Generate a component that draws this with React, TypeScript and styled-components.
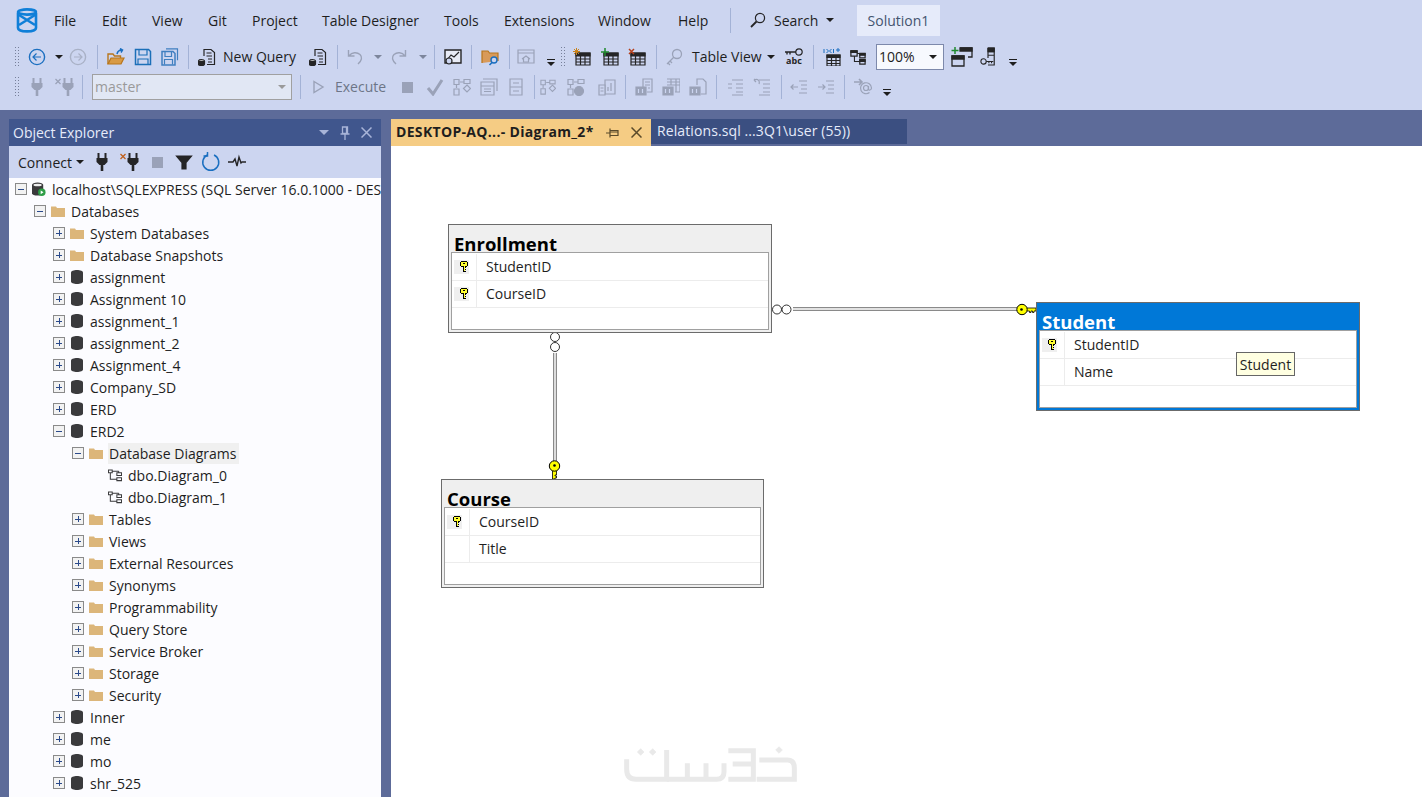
import React from "react";
import styled, { createGlobalStyle } from "styled-components";

const Global = createGlobalStyle`
  html, body { margin: 0; padding: 0; height: 100%; overflow: hidden; }
  body { font-family: "Open Sans", "Liberation Sans", sans-serif; font-size: 14px; color: #1e1e1e; }
`;

const Page = styled.div`
  width: 1422px; height: 797px; display: flex; flex-direction: column; overflow: hidden; background: #5d6b99;
`;
const Chrome = styled.header`
  height: 110px; background: #ccd5f0; display: flex; flex-direction: column; flex: none;
`;
const MenuRow = styled.div`
  height: 42px; box-sizing: border-box; padding-bottom: 2px; display: flex; align-items: center; flex: none;
`;
const LogoSlot = styled.div`
  width: 54px; padding-left: 16px; box-sizing: border-box; display: flex; align-items: center;
`;
const MenuItem = styled.div<{ $w: number }>`
  width: ${(p) => p.$w}px; flex: none; font-size: 14px; white-space: nowrap; color: #1e1e1e;
`;
const MenuSep = styled.div`
  width: 1px; height: 25px; background: #a3b2d6; margin-right: 19px; flex: none;
`;
const SearchBox = styled.div`
  width: 107px; display: flex; align-items: center; gap: 8px; font-size: 14px; flex: none;
`;
const Solution = styled.div`
  width: 83px; height: 31px; margin-top: 1px; padding-bottom: 1px; box-sizing: border-box; background: #e6ebfa; color: #44546f; display: flex; align-items: center; justify-content: center; font-size: 14px; flex: none;
`;
const ToolRow = styled.div<{ $h: number }>`
  height: ${(p) => p.$h}px; padding-left: 12px; display: flex; align-items: center; flex: none;
`;
const Slot = styled.div<{ $w: number }>`
  width: ${(p) => p.$w}px; height: 100%; flex: none; display: flex; align-items: center; justify-content: center;
`;
const Sep = styled.div`
  width: 1px; height: 24px; background: #a3b2d6;
`;
const Grip = styled.div`
  width: 6px; height: 22px; background-image: radial-gradient(#77809a 0.8px, transparent 1px); background-size: 3px 3px;
`;
const Caret = styled.div<{ $c?: string }>`
  width: 0; height: 0; border-left: 4px solid transparent; border-right: 4px solid transparent; border-top: 4px solid ${(p) => p.$c || "#1e1e1e"};
`;
const Overflow = styled.div`
  width: 8px; display: flex; flex-direction: column; align-items: center; gap: 2px; margin-top: 10px;
  &::before { content: ""; width: 8px; height: 1px; background: #1e1e1e; }
  &::after { content: ""; border-left: 4px solid transparent; border-right: 4px solid transparent; border-top: 4px solid #1e1e1e; }
`;
const ToolText = styled.div<{ $w: number; $pad: number; $dim?: boolean }>`
  width: ${(p) => p.$w}px; padding-left: ${(p) => p.$pad}px; box-sizing: border-box; flex: none; white-space: nowrap; font-size: 14px; margin-top: -2px;
  color: ${(p) => (p.$dim ? "#6d7587" : "#1e1e1e")};
`;
const ConnectLabel = styled(ToolText)`
  margin-top: 0;
`;
const ZoomCombo = styled.div`
  width: 68px; height: 26px; box-sizing: border-box; flex: none; margin-left: 10px; border: 1px solid #7d89ab; background: #f7f9fe;
  display: flex; align-items: center; justify-content: space-between; padding: 0 6px 1px 2px; font-size: 14px;
`;
const DbCombo = styled.div`
  width: 200px; height: 26px; box-sizing: border-box; flex: none; margin-left: 6px; border: 1px solid #a0a0a0; background: #e1e7f4; color: #9a9a9a;
  display: flex; align-items: center; justify-content: space-between; padding: 0 5px 1px 2px; font-size: 14px;
`;

const Main = styled.main`
  flex: 1; min-height: 0; display: flex; padding: 9px 0 0 9px; gap: 10px;
`;
const Explorer = styled.section`
  width: 372px; flex: none; display: flex; flex-direction: column; background: #fcfcff; overflow: hidden;
`;
const PanelTitle = styled.div`
  height: 27px; flex: none; background: #40568d; color: #e6ebfa; display: flex; align-items: center; padding: 0 9px 0 4px; font-size: 14px;
`;
const PanelName = styled.div`
  flex: 1;
`;
const PanelTools = styled.div`
  display: flex; align-items: center; gap: 11px;
`;
const PanelCaret = styled.div`
  width: 0; height: 0; border-left: 5px solid transparent; border-right: 5px solid transparent; border-top: 5px solid #a8b4d8;
`;
const PanelBar = styled.div`
  height: 32px; flex: none; background: #ccd5f0; display: flex; align-items: center; padding-left: 9px;
`;
const Tree = styled.div`
  flex: 1; overflow: hidden;
`;
const TreeRow = styled.div<{ $level: number }>`
  height: 22px; display: flex; align-items: center; white-space: nowrap; padding-left: ${(p) => 6 + p.$level * 19}px;
`;
const Expander = styled.div`
  width: 10px; height: 10px; flex: none; box-sizing: content-box; border: 1px solid #8a8a8a; background: #f2f2f2; position: relative; margin-right: 5px;
`;
const ExpanderH = styled.div`
  position: absolute; left: 2px; right: 2px; top: 4.5px; height: 1px; background: #2b4a8b;
`;
const ExpanderV = styled.div`
  position: absolute; top: 2px; bottom: 2px; left: 4.5px; width: 1px; background: #2b4a8b;
`;
const ExpanderGap = styled.div`
  width: 17px; flex: none;
`;
const NodeIcon = styled.div`
  width: 14px; flex: none; display: flex; align-items: center; justify-content: center; margin-right: 6px;
`;
const Label = styled.div<{ $sel?: boolean }>`
  font-size: 14px; line-height: 20px; margin-left: -1px; padding: 1px ${(p) => (p.$sel ? 3 : 1)}px 0 1px; background: ${(p) => (p.$sel ? "#f0f0f0" : "transparent")};
`;

const Doc = styled.section`
  flex: 1; min-width: 0; display: flex; flex-direction: column;
`;
const Tabs = styled.div`
  height: 27px; flex: none; display: flex;
`;
const ActiveTab = styled.div`
  width: 260px; background: #f5cc84; display: flex; align-items: center; padding: 0 9px 2px 5px; box-sizing: border-box; font-size: 14px; font-weight: 700; letter-spacing: 0.32px; color: #1e1e1e; white-space: nowrap;
`;
const TabName = styled.div`
  flex: 1;
`;
const TabTools = styled.div`
  display: flex; align-items: center; gap: 12px; margin-top: 2px;
`;
const Tab = styled.div`
  width: 256px; height: 25px; background: #3b4f81; color: #e6ebfa; display: flex; align-items: center; padding: 0 0 2px 6px; letter-spacing: 0.1px; box-sizing: border-box; font-size: 14px; white-space: nowrap;
`;
const Canvas = styled.div`
  flex: 1; background: #fff; position: relative; overflow: hidden;
`;
const Lines = styled.svg`
  position: absolute; left: 0; top: 0;
`;
const Mark = styled.svg`
  position: absolute; left: 209px; top: 584px;
`;
const TableBox = styled.div<{ $x: number; $y: number; $w: number; $h: number; $sel?: boolean }>`
  position: absolute; left: ${(p) => p.$x}px; top: ${(p) => p.$y}px; width: ${(p) => p.$w}px; height: ${(p) => p.$h}px;
  box-sizing: border-box; border: 1px solid #6b6b6b; background: ${(p) => (p.$sel ? "#0078d7" : "#efefef")};
  display: flex; flex-direction: column; padding: 0 2px 2px;
`;
const TableTitle = styled.div<{ $sel?: boolean }>`
  height: 27px; flex: none; font-size: 18.5px; font-weight: 700; line-height: 16px; display: flex; align-items: flex-end; padding-left: 3px;
  color: ${(p) => (p.$sel ? "#fff" : "#000")};
`;
const Grid = styled.div`
  flex: 1; background: #fff; border: 1px solid #a0a0a0; padding-top: 1px; position: relative;
`;
const ColRow = styled.div`
  height: 27px; box-sizing: border-box; border-bottom: 1px solid #ececec; display: flex; align-items: stretch;
`;
const KeyCell = styled.div`
  width: 25px; flex: none; box-sizing: border-box; border-right: 1px solid #ececec; padding-left: 2px; display: flex; align-items: center;
`;
const KeyChip = styled.div`
  width: 15px; height: 14px; background: #efefef; display: flex; align-items: center; justify-content: flex-end; padding-right: 1px; box-sizing: border-box;
`;
const ColName = styled.div`
  padding: 0 0 2px 9px; display: flex; align-items: center; font-size: 14px; color: #1e1e1e;
`;
const Tip = styled.div`
  position: absolute; left: 845px; top: 206px; width: 59px; height: 24px; box-sizing: border-box; background: #ffffe1; border: 1px solid #666;
  display: flex; align-items: center; justify-content: center; font-size: 14px; color: #1e1e1e;
`;

/* ---------- icons ---------- */
const D = "#252526";
const M = "#9aa2b8";
const Ic: React.FC<{ s?: number; w?: number; h?: number; c?: string; children: React.ReactNode }> = ({ s = 18, w, h, c = D, children }) => (
  <svg width={w || s} height={h || s} viewBox={`0 0 ${w || s} ${h || s}`} fill="none" stroke={c} strokeWidth={1.2}>{children}</svg>
);
const Logo = () => (
  <svg width="22" height="25" viewBox="0 0 22 25" fill="none" stroke="#0f7fd8" strokeWidth="2.6">
    <ellipse cx="11" cy="4" rx="9" ry="2.6" />
    <path d="M2 5v15c0 2 4 3.4 9 3.4s9-1.4 9-3.4V5" />
    <path d="M3 7l16 10M19 7L3 17" />
  </svg>
);
const Circle = ({ dir, c }: { dir: 1 | -1; c: string }) => (
  <Ic c={c}><circle cx="9" cy="9" r="7.6" strokeWidth="1.4" /><path d={dir < 0 ? "M13 9H5.5M8.5 5.5L5 9l3.5 3.5" : "M5 9h7.5M9.5 5.5L13 9l-3.5 3.5"} /></Ic>
);
const OpenFolder = () => (
  <Ic c="#b8761c"><path d="M1 16V6h5l1.500 2h6v2" strokeWidth="1.4" /><path d="M1 16h13l3-6H4z" fill="#d89a45" /><path d="M10 6c.5-2.500 2.500-4 5-4M13 .5L15.500 2 14 4.500" stroke="#1a6fc0" strokeWidth="1.5" /></Ic>
);
const Save = ({ c = "#1b6fb8" }: { c?: string }) => (
  <Ic c={c}><path d="M1.500 1.500h13l2 2v13h-15z" strokeWidth="1.5" /><path d="M5 2v5h8V2M4 16v-5h10v5" /></Ic>
);
const SaveAll = () => (
  <Ic c="#3f7fc0"><path d="M5 .8h11.500v11.500" /><path d="M1 3.500h11l2 2v11.500H1z" strokeWidth="1.5" /><path d="M4 4v4.500h6.500V4M3.500 16.500v-5h8v5" /></Ic>
);
const NewDoc = () => (
  <Ic><path d="M6 8V1.500h7l3.500 3v12H9" /><path d="M8.500 5h5M8.500 8h5.500M10 11h4M10 14h4" /><ellipse cx="3.500" cy="13" rx="3" ry="1.300" fill="#eee" /><path d="M.5 13.500v2.500c0 .9 1.300 1.500 3 1.500s3-.6 3-1.500v-2.500z" fill={D} /></Ic>
);
const Undo = ({ flip }: { flip?: boolean }) => (
  <Ic c={M}><g transform={flip ? "translate(18 0) scale(-1 1)" : undefined}><path d="M2.500 2v6h6M3 8c3-4 8-4 11-1.500 2.500 2.500 2 6-2 9.500" strokeWidth="1.4" /></g></Ic>
);
const Monitor = () => (
  <Ic><path d="M1 2h16v13H1z" strokeWidth="1.4" fill="#e8ebf5" /><path d="M3 12l4-5 3 2 5-5" /><circle cx="5" cy="13" r="3" fill="#ccd5f0" /></Ic>
);
const FolderSearch = () => (
  <Ic c="#b8761c"><path d="M1 15V3h6l1.500 2H17v8" fill="#d89a5a" strokeWidth="1.200" /><circle cx="13" cy="12" r="3" stroke="#1a6fc0" strokeWidth="1.400" fill="#ccd5f0" /><path d="M11 14.500L8.500 17" stroke="#1a6fc0" strokeWidth="1.600" /></Ic>
);
const Home = () => (
  <Ic c={M}><path d="M1 2h16v13H1zM1 5h16" /><path d="M5 11l4-3 4 3M6.500 10v4h5v-4" /></Ic>
);
const TableGrid = ({ mark }: { mark?: "star" | "plus" | "x" }) => (
  <Ic>
    <path d="M3 5h14v12H3z" strokeWidth="1.2" />
    <path d="M3 5h14v3H3z" fill={D} />
    <path d="M3 11h14M3 14h14M7.500 8v9M12 8v9" />
    {mark === "star" && <path d="M1 1l5 5M6 1L1 6M3.500 0v7M0 3.500h7" stroke="#c9821a" strokeWidth="1" />}
    {mark === "plus" && <path d="M4 0v8M0 4h8" stroke="#1f8a2e" strokeWidth="1.500" />}
    {mark === "x" && <path d="M1 1l5 5M6 1L1 6" stroke="#b5401c" strokeWidth="1.500" />}
  </Ic>
);
const BigKey = () => (
  <Ic c={M}><circle cx="12" cy="6" r="4.500" strokeWidth="1.300" /><path d="M9 9l-7 7M3 15l2 2M5 13l2 2" strokeWidth="1.300" /></Ic>
);
const AbcText = styled.text`
  font-family: "Open Sans", sans-serif; font-size: 9px; font-weight: 700; fill: ${D}; stroke: none;
`;
const KeyAbc = () => (
  <svg width="20" height="18" viewBox="0 0 20 18" fill="none" stroke={D} strokeWidth="1.200">
    <circle cx="15" cy="4" r="3.200" /><path d="M12 4H1M3 4v2.500M6 4v2.500" strokeWidth="1.400" />
    <AbcText x="2" y="16">abc</AbcText>
  </svg>
);
const Relate = () => (
  <Ic><path d="M1 2h7v6H1zM11 5h6v5h-6zM11 12h6v5h-6z" strokeWidth="1.400" /><path d="M1 2h7v2H1zM11 5h6v2h-6zM11 12h6v2h-6z" fill={D} /><path d="M8 5h3M5 8v6h6" /></Ic>
);
const ColsTable = () => (
  <Ic><path d="M4 7h13v11H4z" strokeWidth="1.200" /><path d="M4 7h13v2.500H4z" fill={D} /><path d="M4 12.500h13M4 15.500h13M8.500 9v9M13 9v9" /><path d="M1 1v4M3.500 1l2 2-2 2M8.500 1l-2 2 2 2M10.500 1v4M14 1h2v2h-2z" stroke="#1a6fc0" strokeWidth="1" /></Ic>
);
const AddTable = () => (
  <svg width="22" height="20" viewBox="0 0 22 20" fill="none" stroke={D} strokeWidth="1.300">
    <path d="M9 1h12v9H17" /><path d="M9 1h12v3H9z" fill={D} />
    <path d="M1 9h12v10H1z" /><path d="M1 9h12v3H1z" fill={D} />
    <path d="M4 0v7M.500 3.500h7" stroke="#1f8a2e" strokeWidth="1.500" />
  </svg>
);
const KeyCols = () => (
  <svg width="18" height="22" viewBox="0 0 18 22" fill="none" stroke={D} strokeWidth="1.200">
    <path d="M9 1h7v19H9M9 1v11M9 5h7M9 9h7" strokeWidth="1.300" /><path d="M9 1h7v4H9z" fill={D} />
    <circle cx="4" cy="16" r="3" /><path d="M7 16h8M10 16v2M13 16v2" />
  </svg>
);
const Plug = ({ c = D, x, xc = "#c0601c" }: { c?: string; x?: boolean; xc?: string }) => (
  <svg width={x ? 20 : 14} height="18" viewBox={x ? "-6 0 20 18" : "0 0 14 18"} fill="none">
    <path d="M3.500 0v5M10.500 0v5" stroke={c} strokeWidth="2" />
    <path d="M1.500 5h11v4l-3 3H4.500l-3-3z" fill={c} />
    <path d="M7 11v7" stroke={c} strokeWidth="2.600" />
    {x && <path d="M-5.500 1l5 5M-.5 1l-5 5" stroke={xc} strokeWidth="1.300" />}
  </svg>
);
const Play = () => <Ic c={M} s={14}><path d="M3 1.500l9 5.500-9 5.500z" strokeWidth="1.400" /></Ic>;
const Stop = () => <Ic c={M} s={11}><rect x="0" y="0" width="11" height="11" fill={M} stroke="none" /></Ic>;
const Check = () => <Ic c={M}><path d="M2 10l5 6 9-14" strokeWidth="3" /></Ic>;
const FlowA = ({ badge }: { badge?: boolean }) => (
  <Ic c={M}><path d="M1 1.500h5v5H1zM11 1.500h6v4h-6zM7 4h4M3.500 7v3M1 11h5v6H1z" />{badge && <circle cx="12" cy="13" r="4.500" fill={M} />}{!badge && <path d="M14 7l3.500 3.500L14 14l-3.500-3.500z" />}</Ic>
);
const Panels = () => <Ic c={M}><path d="M3 1h14v12M1 4h13v13H1zM1 8h13M4 11h7M4 13.500h7" /></Ic>;
const Pane = () => <Ic c={M}><path d="M3 1h12v16H3zM3 9h12M6 5h6M6 13h6" /></Ic>;
const Bars = () => <Ic c={M}><path d="M7 2h10v14H7zM10 13V9M13 13V5" /><path d="M1 7h6v10H1z" fill="#ccd5f0" /><path d="M2.500 10h3M2.500 13h3" /></Ic>;
const Doc01 = ({ v }: { v: number }) => (
  <Ic c={M}>
    {v === 0 && <path d="M8 9V1h9v13h-5M10 4h5M10 7h5M13 10h2" />}
    {v === 1 && <path d="M5 1h13v13h-5M5 4h13M5 7h13M9 1v6M14 1v13" />}
    {v === 2 && <path d="M8 7V1h6l3 3v12h-5" />}
    <path d="M1 9h10v8H1z" fill={M} /><path d="M3.500 11v4M7.500 11v4" stroke="#ccd5f0" />
  </Ic>
);
const IndentL = ({ back }: { back?: boolean }) => (
  <Ic c={M}><path d="M6 2h11M10 6h7M10 10h7M10 14h7M6 17h11" />{back ? <path d="M1 2c4-2 6 1 5 4M1 2l1-1M1 2l2 2" /> : <path d="M2 6h4M2 10h4" />}</Ic>
);
const Arrowed = ({ right }: { right?: boolean }) => (
  <Ic c={M}><path d="M9 3h8M11 7h6M11 11h6M9 15h8" />{right ? <path d="M1 9h7M5.500 6.500L8 9l-2.500 2.500" /> : <path d="M8 9H1M3.500 6.500L1 9l2.500 2.500" />}</Ic>
);
const AtArrow = () => (
  <svg width="20" height="18" viewBox="0 0 20 18" fill="none" stroke={M} strokeWidth="1.200"><path d="M1 4h8M6 1l3 3-3 3" strokeWidth="1.600" /><circle cx="13" cy="10" r="2.500" /><path d="M15.500 8v3c0 2 3 1 3-1a5.500 5.500 0 10-2 4.500" /></svg>
);
const PanelFilter = () => <Ic><path d="M1.500 3h15L11 9.500V16H7V9.500z" fill={D} /></Ic>;
const Refresh = () => (
  <svg width="20" height="20" viewBox="0 0 20 20" fill="none" stroke="#1a6fc0" strokeWidth="1.500"><path d="M13 3a8 8 0 11-6.500 0" /><path d="M6.500 0v4H2.500" /></svg>
);
const Pulse = () => <Ic><path d="M0 9h5l2-3 2 7 2-9 2 6 1-1h4" strokeWidth="1.400" /></Ic>;
const Glass = () => (
  <Ic w={16} h={16} s={16}><circle cx="10" cy="6" r="4.600" /><path d="M6.500 9.500L1 15" strokeWidth="1.800" /></Ic>
);
const Folder = () => (
  <svg width="14" height="12" viewBox="0 0 14 12"><path d="M0 1.500h5l1 1.500h8v9H0z" fill="#dcb67a" /></svg>
);
const DbIcon = () => (
  <svg width="12" height="14" viewBox="0 0 12 14"><path d="M0 2.500C0 1 2.700 0 6 0s6 1 6 2.500v9C12 13 9.300 14 6 14s-6-1-6-2.500z" fill="#3a3a3c" /></svg>
);
const ServerIcon = () => (
  <svg width="15" height="15" viewBox="0 0 15 15"><path d="M0 2.500C0 1 2.700 0 6 0s6 1 6 2.500v9C12 13 9.300 14 6 14s-6-1-6-2.500z" fill="#3a3a3c" /><ellipse cx="6" cy="2.600" rx="4.500" ry="1.300" fill="#eee" /><circle cx="10.500" cy="10.500" r="4" fill="#2e9e47" /><path d="M9.300 8.500l3 2-3 2z" fill="#fff" /></svg>
);
const DiagramIcon = () => (
  <svg width="15" height="13" viewBox="0 0 15 13" fill="none" stroke="#3a3a3c" strokeWidth="1.100"><path d="M.5.500h4v3h-4zM9.500 3.500h5v3h-5zM9.500 9h5v3h-5zM4.500 2h7M11.500 2v1.500M2.500 3.500V10.500H9.500" /></svg>
);
const Pin = ({ c }: { c: string }) => (
  <svg width="10" height="14" viewBox="0 0 10 14" fill="none" stroke={c} strokeWidth="1.300"><path d="M2.500 1h5v6.500h-5zM.5 8h9M5 8v6M6.500 1v6" /></svg>
);
const PinSide = ({ c }: { c: string }) => (
  <svg width="13" height="10" viewBox="0 0 13 10" fill="none" stroke={c} strokeWidth="1.200"><path d="M4 2.500h8v5H4zM4 .5v9M0 5h4M4 4h8" /></svg>
);
const Close = ({ c }: { c: string }) => (
  <svg width="11" height="11" viewBox="0 0 11 11" fill="none" stroke={c} strokeWidth="1.500"><path d="M.5.5l10 10M10.500.5l-10 10" /></svg>
);
const ColKey = () => (
  <svg width="8" height="12" viewBox="0 0 8 12" shapeRendering="crispEdges">
    <path d="M1 0h6v1h1v4H7v1H6v1H5v1h1v1H5v1h1v1H3V6H1V5H0V1h1z" fill="#000" />
    <path d="M1 1h6v4H5v5H4V5H1z" fill="#ffff33" />
    <rect x="3" y="2" width="2" height="1" fill="#000" />
  </svg>
);

/* ---------- data ---------- */
type NodeRow = { level: number; exp?: "+" | "-"; icon: "server" | "folder" | "db" | "diagram"; text: string; sel?: boolean };
const rows: NodeRow[] = [
  { level: 0, exp: "-", icon: "server", text: "localhost\\SQLEXPRESS (SQL Server 16.0.1000 - DESKTOP-AQ3Q1\\user)" },
  { level: 1, exp: "-", icon: "folder", text: "Databases" },
  { level: 2, exp: "+", icon: "folder", text: "System Databases" },
  { level: 2, exp: "+", icon: "folder", text: "Database Snapshots" },
  { level: 2, exp: "+", icon: "db", text: "assignment" },
  { level: 2, exp: "+", icon: "db", text: "Assignment 10" },
  { level: 2, exp: "+", icon: "db", text: "assignment_1" },
  { level: 2, exp: "+", icon: "db", text: "assignment_2" },
  { level: 2, exp: "+", icon: "db", text: "Assignment_4" },
  { level: 2, exp: "+", icon: "db", text: "Company_SD" },
  { level: 2, exp: "+", icon: "db", text: "ERD" },
  { level: 2, exp: "-", icon: "db", text: "ERD2" },
  { level: 3, exp: "-", icon: "folder", text: "Database Diagrams", sel: true },
  { level: 4, icon: "diagram", text: "dbo.Diagram_0" },
  { level: 4, icon: "diagram", text: "dbo.Diagram_1" },
  { level: 3, exp: "+", icon: "folder", text: "Tables" },
  { level: 3, exp: "+", icon: "folder", text: "Views" },
  { level: 3, exp: "+", icon: "folder", text: "External Resources" },
  { level: 3, exp: "+", icon: "folder", text: "Synonyms" },
  { level: 3, exp: "+", icon: "folder", text: "Programmability" },
  { level: 3, exp: "+", icon: "folder", text: "Query Store" },
  { level: 3, exp: "+", icon: "folder", text: "Service Broker" },
  { level: 3, exp: "+", icon: "folder", text: "Storage" },
  { level: 3, exp: "+", icon: "folder", text: "Security" },
  { level: 2, exp: "+", icon: "db", text: "Inner" },
  { level: 2, exp: "+", icon: "db", text: "me" },
  { level: 2, exp: "+", icon: "db", text: "mo" },
  { level: 2, exp: "+", icon: "db", text: "shr_525" },
];
const nodeIcons = { server: <ServerIcon />, folder: <Folder />, db: <DbIcon />, diagram: <DiagramIcon /> };
const menus: [string, number][] = [["File", 48], ["Edit", 50], ["View", 56], ["Git", 44], ["Project", 70], ["Table Designer", 122], ["Tools", 60], ["Extensions", 94], ["Window", 80], ["Help", 52]];

type Col = { name: string; key?: boolean };
const DiagramTable: React.FC<{ x: number; y: number; w: number; h: number; title: string; sel?: boolean; cols: Col[] }> = ({ x, y, w, h, title, sel, cols }) => (
  <TableBox $x={x} $y={y} $w={w} $h={h} $sel={sel}>
    <TableTitle $sel={sel}>{title}</TableTitle>
    <Grid>
      {cols.map((c) => (
        <ColRow key={c.name}>
          <KeyCell>{c.key && <KeyChip><ColKey /></KeyChip>}</KeyCell>
          <ColName>{c.name}</ColName>
        </ColRow>
      ))}
    </Grid>
  </TableBox>
);

const Yellow = "#ffff00";
const Connectors = () => (
  <Lines width="1031" height="651" fill="none">
    <path d="M402 163H628" stroke="#8a8a8a" strokeWidth="4" />
    <path d="M402 163H628" stroke="#fff" strokeWidth="1.400" />
    <path d="M164 207V315" stroke="#8a8a8a" strokeWidth="4" />
    <path d="M164 207V315" stroke="#fff" strokeWidth="1.400" />
    <circle cx="386" cy="163.500" r="4.500" fill="#fff" stroke="#000" strokeWidth="0.800" />
    <circle cx="395.500" cy="163.500" r="4.500" fill="#fff" stroke="#000" strokeWidth="0.800" />
    <circle cx="164" cy="191" r="4.500" fill="#fff" stroke="#000" strokeWidth="0.800" />
    <circle cx="164" cy="201" r="4.500" fill="#fff" stroke="#000" strokeWidth="0.800" />
    <path d="M635 162h10v3h-2v1.500h-1.500V165h-1.500v1.500h-1.500V165H635z" fill={Yellow} stroke="#000" strokeWidth="0.800" />
    <circle cx="631" cy="163.500" r="5.200" fill={Yellow} stroke="#000" />
    <circle cx="630.500" cy="163.500" r="1.300" fill="#000" />
    <path d="M161.500 324v9h2.500v-1h1.500v-2H164v-1h1.500v-5z" fill={Yellow} stroke="#000" strokeWidth="0.800" />
    <circle cx="163.500" cy="320" r="5.200" fill={Yellow} stroke="#000" />
    <circle cx="163.500" cy="319.500" r="1.300" fill="#000" />
  </Lines>
);

export default function App() {
  return (
    <Page>
      <Global />
      <Chrome>
        <MenuRow>
          <LogoSlot><Logo /></LogoSlot>
          {menus.map(([m, w]) => <MenuItem key={m} $w={w}>{m}</MenuItem>)}
          <MenuSep />
          <SearchBox><Glass /><span>Search</span><Caret /></SearchBox>
          <Solution>Solution1</Solution>
        </MenuRow>
        <ToolRow $h={30}>
          <Slot $w={10}><Grip /></Slot>
          <Slot $w={30}><Circle dir={-1} c="#1b6fc0" /></Slot>
          <Slot $w={14}><Caret /></Slot>
          <Slot $w={24}><Circle dir={1} c="#a9b1c6" /></Slot>
          <Slot $w={14}><Sep /></Slot>
          <Slot $w={24}><OpenFolder /></Slot>
          <Slot $w={30}><Save /></Slot>
          <Slot $w={24}><SaveAll /></Slot>
          <Slot $w={12}><Sep /></Slot>
          <Slot $w={26}><NewDoc /></Slot>
          <ToolText $w={80} $pad={3}>New Query</ToolText>
          <Slot $w={36}><NewDoc /></Slot>
          <Slot $w={2}><Sep /></Slot>
          <Slot $w={34}><Undo /></Slot>
          <Slot $w={12}><Caret $c="#7d869c" /></Slot>
          <Slot $w={30}><Undo flip /></Slot>
          <Slot $w={18}><Caret $c="#7d869c" /></Slot>
          <Slot $w={4}><Sep /></Slot>
          <Slot $w={34}><Monitor /></Slot>
          <Slot $w={2}><Sep /></Slot>
          <Slot $w={36}><FolderSearch /></Slot>
          <Slot $w={2}><Sep /></Slot>
          <Slot $w={32}><Home /></Slot>
          <Slot $w={18}><Overflow /></Slot>
          <Slot $w={6}><Grip /></Slot>
          <Slot $w={32}><TableGrid mark="star" /></Slot>
          <Slot $w={24}><TableGrid mark="plus" /></Slot>
          <Slot $w={30}><TableGrid mark="x" /></Slot>
          <Slot $w={8}><Sep /></Slot>
          <Slot $w={28}><BigKey /></Slot>
          <ToolText $w={78} $pad={4}>Table View</ToolText>
          <Slot $w={10}><Caret /></Slot>
          <Slot $w={36}><KeyAbc /></Slot>
          <Slot $w={2}><Sep /></Slot>
          <Slot $w={36}><ColsTable /></Slot>
          <Slot $w={16}><Relate /></Slot>
          <ZoomCombo><span>100%</span><Caret /></ZoomCombo>
          <Slot $w={36}><AddTable /></Slot>
          <Slot $w={16}><KeyCols /></Slot>
          <Slot $w={34}><Overflow /></Slot>
        </ToolRow>
        <ToolRow $h={30}>
          <Slot $w={10}><Grip /></Slot>
          <Slot $w={30}><Plug c={M} /></Slot>
          <Slot $w={26}><Plug c={M} x xc={M} /></Slot>
          <Slot $w={8}><Sep /></Slot>
          <DbCombo><span>master</span><Caret $c="#9a9a9a" /></DbCombo>
          <Slot $w={16}><Sep /></Slot>
          <Slot $w={20}><Play /></Slot>
          <ToolText $w={66} $pad={7} $dim>Execute</ToolText>
          <Slot $w={26}><Stop /></Slot>
          <Slot $w={30}><Check /></Slot>
          <Slot $w={24}><FlowA /></Slot>
          <Slot $w={30}><Panels /></Slot>
          <Slot $w={24}><Pane /></Slot>
          <Slot $w={12}><Sep /></Slot>
          <Slot $w={16}><FlowA /></Slot>
          <Slot $w={40}><FlowA badge /></Slot>
          <Slot $w={22}><Bars /></Slot>
          <Slot $w={14}><Sep /></Slot>
          <Slot $w={24}><Doc01 v={0} /></Slot>
          <Slot $w={30}><Doc01 v={1} /></Slot>
          <Slot $w={24}><Doc01 v={2} /></Slot>
          <Slot $w={12}><Sep /></Slot>
          <Slot $w={26}><IndentL /></Slot>
          <Slot $w={28}><IndentL back /></Slot>
          <Slot $w={10}><Sep /></Slot>
          <Slot $w={26}><Arrowed /></Slot>
          <Slot $w={28}><Arrowed right /></Slot>
          <Slot $w={8}><Sep /></Slot>
          <Slot $w={30}><AtArrow /></Slot>
          <Slot $w={18}><Overflow /></Slot>
        </ToolRow>
      </Chrome>
      <Main>
        <Explorer>
          <PanelTitle>
            <PanelName>Object Explorer</PanelName>
            <PanelTools><PanelCaret /><Pin c="#a8b4d8" /><Close c="#a8b4d8" /></PanelTools>
          </PanelTitle>
          <PanelBar>
            <ConnectLabel $w={58} $pad={0}>Connect</ConnectLabel>
            <Slot $w={8}><Caret /></Slot>
            <Slot $w={36}><Plug /></Slot>
            <Slot $w={20}><Plug x /></Slot>
            <Slot $w={34}><Stop /></Slot>
            <Slot $w={20}><PanelFilter /></Slot>
            <Slot $w={34}><Refresh /></Slot>
            <Slot $w={18}><Pulse /></Slot>
          </PanelBar>
          <Tree>
            {rows.map((r, i) => (
              <TreeRow key={i} $level={r.level}>
                {r.exp ? (
                  <Expander><ExpanderH />{r.exp === "+" && <ExpanderV />}</Expander>
                ) : <ExpanderGap />}
                <NodeIcon>{nodeIcons[r.icon]}</NodeIcon>
                <Label $sel={r.sel}>{r.text}</Label>
              </TreeRow>
            ))}
          </Tree>
        </Explorer>
        <Doc>
          <Tabs>
            <ActiveTab>
              <TabName>DESKTOP-AQ...- Diagram_2*</TabName>
              <TabTools><PinSide c="#5a4a2a" /><Close c="#5a4a2a" /></TabTools>
            </ActiveTab>
            <Tab>Relations.sql ...3Q1\user (55))</Tab>
          </Tabs>
          <Canvas>
            <Mark width="220" height="67" viewBox="0 0 660 201" fill="none" stroke="#e9e9e9" strokeWidth="15" role="img" aria-label="logo">
              <path d="M80 88v30q0 30 28 30h92V60" />
              <path d="M200 148h150q22 0 22-22v-26M262 100v48M318 100v48" />
              <path d="M385 62h75v86h-75M398 102h62" />
              <path d="M478 90h85q20 0 20 24v34H470" />
              <path d="M122 56l10 10-10 10-10-10zM158 56l10 10-10 10-10-10zM537 50l10 10-10 10-10-10z" fill="#e9e9e9" strokeWidth="2" />
            </Mark>
            <Connectors />
            <DiagramTable x={57} y={78} w={324} h={109} title="Enrollment" cols={[{ name: "StudentID", key: true }, { name: "CourseID", key: true }]} />
            <DiagramTable x={645} y={156} w={324} h={109} title="Student" sel cols={[{ name: "StudentID", key: true }, { name: "Name" }]} />
            <DiagramTable x={50} y={333} w={323} h={109} title="Course" cols={[{ name: "CourseID", key: true }, { name: "Title" }]} />
            <Tip>Student</Tip>
          </Canvas>
        </Doc>
      </Main>
    </Page>
  );
}
